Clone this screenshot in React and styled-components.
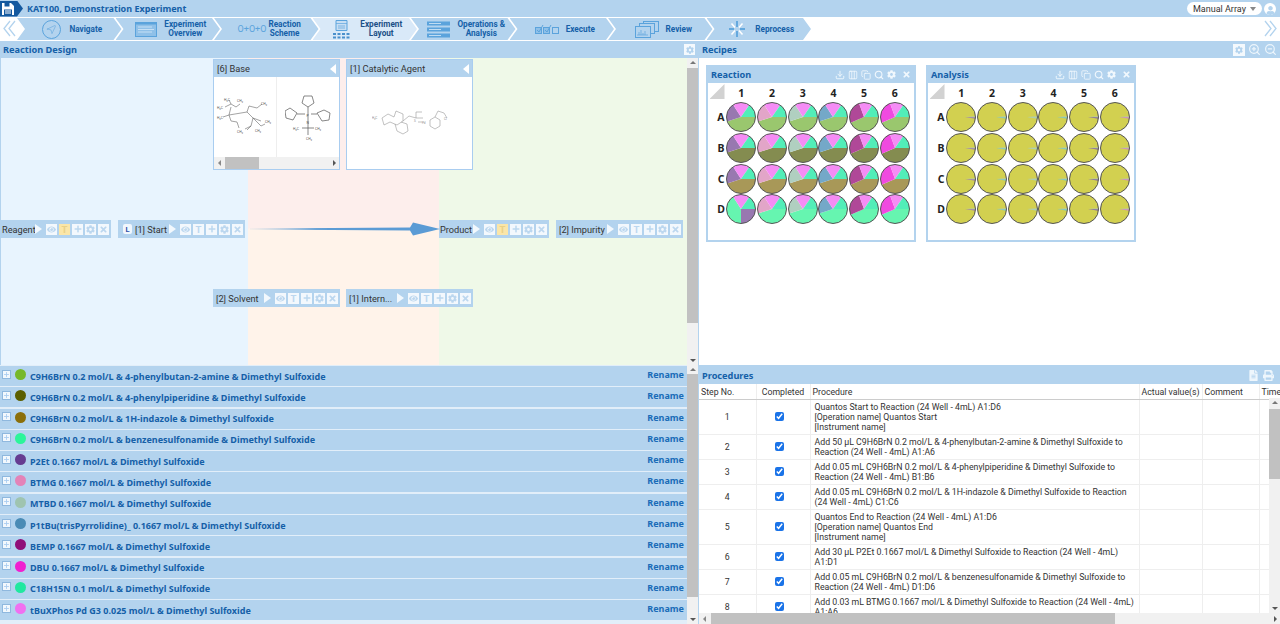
import React from "react";
import styled, { createGlobalStyle } from "styled-components";
import { FaEye, FaPlus, FaCog, FaTimes, FaUser, FaPrint, FaFileAlt } from "react-icons/fa";
import { Download, Columns3, Copy, Search, ZoomIn, ZoomOut, Navigation, Plus } from "lucide-react";

const BLUE = "#b3d3ee";
const INK = "#1560a8";
const BOLD_FONT = `"Noto Sans", "DejaVu Sans", sans-serif`;

const GlobalStyle = createGlobalStyle`
    html, body {
        margin: 0;
        padding: 0;
        background: #fff;
        font-family: Roboto, "Noto Sans", sans-serif;
        font-size: 9px;
        color: #333;
    }
`;

const Page = styled.div`
    width: 1280px;
    height: 624px;
    display: flex;
    flex-direction: column;
    overflow: hidden;
    background: #fff;
`;

/* top bar */
const TopBar = styled.div`
    height: 17px;
    background: ${BLUE};
    display: flex;
    align-items: center;
`;

const SaveBadge = styled.div`
    width: 23px;
    height: 16px;
    background: #14599f;
    clip-path: polygon(0 0, 17px 0, 100% 50%, 17px 100%, 0 100%);
    display: flex;
    align-items: center;
    padding-left: 2px;
    box-sizing: border-box;
`;

const ExperimentTitle = styled.div`
    margin-left: 4px;
    font-family: ${BOLD_FONT};
    font-weight: 700;
    font-size: 9px;
    color: ${INK};
    flex: 1;
`;

const ModeSelect = styled.div`
    width: 75px;
    height: 13px;
    background: #fff;
    border-radius: 7px;
    display: flex;
    align-items: center;
    justify-content: space-between;
    padding: 0 6px;
    box-sizing: border-box;
    font-size: 9px;
    color: #333;
    white-space: nowrap;

    &::after {
        content: "";
        border: 3.5px solid transparent;
        border-top: 4px solid #888;
        border-bottom: 0;
    }
`;

const UserBubble = styled.div`
    width: 12px;
    height: 12px;
    border-radius: 50%;
    background: #fff;
    margin: 0 4px 0 2px;
    color: ${BLUE};
    display: flex;
    align-items: flex-end;
    justify-content: center;
    overflow: hidden;
`;

/* wizard */
const Wizard = styled.div`
    height: 22px;
    padding: 1px 0 0 17px;
    display: flex;
    align-items: stretch;
    position: relative;
    background: #fff;
`;

const WizardArrow = styled.div`
    position: absolute;
    top: 0;
    ${(p) => (p.$right ? "right: 3px;" : "left: 3px;")}
    height: 100%;
    display: flex;
    align-items: center;
`;

const Step = styled.div`
    width: 104.5px;
    margin-right: -6px;
    flex: none;
    background: ${(p) => (p.$active ? "#d9e9f8" : BLUE)};
    clip-path: polygon(0 0, calc(100% - 8px) 0, 100% 50%, calc(100% - 8px) 100%, 0 100%, 8px 50%);
    display: flex;
    align-items: center;
    justify-content: center;
    gap: ${(p) => p.$gap ?? 7}px;
    padding-left: 6px;
    box-sizing: border-box;
`;

const StepLabel = styled.div`
    font-size: 8.2px;
    font-weight: 700;
    line-height: 9px;
    text-align: center;
    white-space: nowrap;
    color: ${(p) => (p.$active ? "#1b4f86" : INK)};
`;

const SchemeGlyph = styled.span`
    font-size: 9px;
    color: #5ba3dc;
    white-space: nowrap;
`;

/* panels */
const Workspace = styled.div`
    flex: 1;
    display: grid;
    grid-template-columns: 698px 582px;
    grid-template-rows: 324px 1fr;
    min-height: 0;
    background: ${BLUE};
    margin-top: 1px;
`;

const Panel = styled.section`
    display: flex;
    flex-direction: column;
    min-height: 0;
    min-width: 0;
    overflow: hidden;
    ${(p) => p.$right && `border-left: 1px solid ${BLUE};`}
`;

const PanelHeader = styled.header`
    height: 17px;
    flex: none;
    background: ${BLUE};
    display: flex;
    align-items: center;
    padding: 0 ${(p) => p.$end || 3}px 0 3px;
    gap: ${(p) => p.$gap || 3}px;
    ${(p) => p.$lower && "margin-top: 2px;"}
`;

const PanelTitle = styled.h2`
    margin: -1px 0 0;
    flex: 1;
    font-family: ${BOLD_FONT};
    font-size: 9.2px;
    font-weight: 700;
    color: ${INK};
`;

const HeaderTile = styled.span`
    width: ${(p) => p.$size || 11}px;
    height: ${(p) => p.$size || 11}px;
    background: #f4f9fd;
    color: ${BLUE};
    display: flex;
    align-items: center;
    justify-content: center;
`;

const HeaderIcon = styled.span`
    color: #eef6fc;
    display: flex;
`;

const Body = styled.div`
    flex: 1;
    min-height: 0;
    display: flex;
    background: #fff;
`;

/* scrollbars */
const VTrack = styled.div`
    width: 11px;
    flex: none;
    background: #f1f1f1;
    display: flex;
    flex-direction: column;
    align-items: stretch;
    position: relative;
`;

const Thumb = styled.div`
    background: #c1c1c1;
    margin-top: ${(p) => p.$top}px;
    height: ${(p) => p.$size}px;
`;

const ArrowMark = styled.span`
    position: absolute;
    left: 50%;
    margin-left: -3px;
    ${(p) => (p.$up ? "top: 3px;" : "bottom: 3px;")}
    border: 3px solid transparent;
    ${(p) => (p.$up ? "border-bottom: 3px solid #777; border-top: 0;" : "border-top: 3px solid #555; border-bottom: 0;")}
`;

const HTrack = styled.div`
    height: ${(p) => p.$h || 10}px;
    background: #f1f1f1;
    position: relative;
    flex: none;
`;

const HThumb = styled.div`
    background: #c1c1c1;
    height: 100%;
    margin-left: ${(p) => p.$left}px;
    width: ${(p) => p.$size}px;
`;

const SideArrow = styled.span`
    position: absolute;
    top: 50%;
    margin-top: -3px;
    ${(p) => (p.$end ? "right: 3px;" : "left: 4px;")}
    border: 3px solid transparent;
    ${(p) => (p.$end ? "border-left: 3px solid #555; border-right: 0;" : "border-right: 3px solid #888; border-left: 0;")}
`;

/* reaction canvas */
const Canvas = styled.div`
    flex: 1;
    position: relative;
    display: grid;
    grid-template-columns: 247px 191px 1fr;
    border-left: 1px solid ${BLUE};
    overflow: hidden;
`;

const BlueBand = styled.div`
    background: #e8f4fe;
`;

const MiddleBand = styled.div`
    background: linear-gradient(#fdeeec 0, #fdeeec 170px, #fff3ea 171px);
`;

const GreenBand = styled.div`
    background: #eff9e8;
`;

const Tray = styled.div`
    position: absolute;
    left: ${(p) => p.$x}px;
    top: 1px;
    width: 127px;
    height: 111px;
    border: 1px solid #a9cdf0;
    box-sizing: border-box;
    background: #fff;
    display: flex;
    flex-direction: column;
`;

const TrayHead = styled.div`
    height: 17px;
    flex: none;
    background: ${BLUE};
    display: flex;
    align-items: center;
    justify-content: space-between;
    padding: 0 3px;
    font-size: 9.3px;
    color: #333;

    &::after {
        content: "";
        border: 5px solid transparent;
        border-right: 6px solid #fff;
        border-left: 0;
    }
`;

const TrayBody = styled.div`
    flex: 1;
    display: flex;
    min-height: 0;
`;

const Molecule = styled.div`
    flex: 1;
    display: flex;
    align-items: center;
    justify-content: center;
    & + & {
        border-left: 1px solid #eee;
    }
`;

const Node = styled.div`
    position: absolute;
    left: ${(p) => p.$x}px;
    top: ${(p) => p.$y}px;
    width: ${(p) => p.$w}px;
    height: 18px;
    background: ${BLUE};
    display: flex;
    align-items: center;
    padding: 0 2px 0 ${(p) => p.$pad}px;
    box-sizing: border-box;
    font-size: 9.2px;
    color: #333;
    gap: 2px;
`;

const NodeName = styled.span`
    flex: 1;
    white-space: nowrap;
    min-width: 0;
`;

const LimitBadge = styled.span`
    width: 9px;
    height: 10px;
    flex: none;
    background: #f1f7fd;
    border-radius: 2px;
    color: #2c4fa8;
    font-size: 7.5px;
    font-weight: 700;
    display: flex;
    align-items: center;
    justify-content: center;
    margin: 0 1px 0 2px;
`;

const PlayMark = styled.span`
    border: 4px solid transparent;
    border-left: 7px solid #f2f8fd;
    border-right: 0;
    border-top-width: 5px;
    border-bottom-width: 5px;
    margin-right: 2px;
    flex: none;
`;

const Tool = styled.span`
    width: 11px;
    height: 11px;
    flex: none;
    background: ${(p) => (p.$on ? "#fbe6a8" : "#f3f8fd")};
    color: ${(p) => (p.$on ? "#e9d188" : "#bcd7ef")};
    font-size: 9.5px;
    font-weight: 700;
    display: flex;
    align-items: center;
    justify-content: center;
`;

const ArrowDrawing = styled.svg`
    position: absolute;
    left: 249px;
    top: 164px;
`;

/* reagents list */
const ReagentList = styled.div`
    flex: 1;
    min-width: 0;
    background: #e2eef9;
    display: flex;
    flex-direction: column;
    gap: 1.3px;
    padding-top: 1px;
`;

const Reagent = styled.div`
    height: 20px;
    flex: none;
    background: ${BLUE};
    display: flex;
    align-items: center;
    padding: 0 3px 0 2px;
    font-family: ${BOLD_FONT};
    font-size: 9px;
    font-weight: 700;
    color: ${INK};
`;

const Expander = styled.span`
    width: 9px;
    height: 9px;
    flex: none;
    background: #f2f8fd;
    border: 1px solid #8fb8de;
    box-sizing: border-box;
    margin: -4px 4px 0 0;
    color: #a9cdf0;
    display: flex;
    align-items: center;
    justify-content: center;
`;

const Dot = styled.span`
    width: 11px;
    height: 11px;
    flex: none;
    border-radius: 50%;
    background: ${(p) => p.$c};
    margin: -3px 4px 0 0;
`;

const ReagentName = styled.span`
    flex: 1;
    white-space: nowrap;
`;

const RenameLink = styled.span`
    color: #1a6cb8;
    margin-top: -3px;
`;

/* recipes */
const RecipeArea = styled.div`
    flex: 1;
    background: #fff;
    display: flex;
    align-items: flex-start;
    gap: 10px;
    padding: 7px;
`;

const RecipeCard = styled.div`
    width: 210px;
    height: 177px;
    box-sizing: border-box;
    border: 2px solid ${BLUE};
    border-top-width: 1px;
    display: flex;
    flex-direction: column;
`;

const CardHead = styled.div`
    height: 17px;
    flex: none;
    background: ${BLUE};
    display: flex;
    align-items: center;
    padding: 0 3px;
    gap: 3px;
    color: #f1f8fd;
`;

const CardTitle = styled.div`
    flex: 1;
    font-family: ${BOLD_FONT};
    font-size: 9.2px;
    font-weight: 700;
    color: ${INK};
`;

const CloseMark = styled.span`
    display: flex;
    margin-left: 3px;
`;

const Plate = styled.div`
    display: grid;
    grid-template-columns: 18px repeat(6, 30.7px);
    grid-template-rows: 19px repeat(4, 30.7px);
    font-family: ${BOLD_FONT};
    font-size: 10.5px;
    font-weight: 700;
    color: #222;
    justify-items: center;
    align-items: center;
`;

const PlateCorner = styled.div`
    width: 15px;
    height: 15px;
    background: #d2d2d2;
    clip-path: polygon(100% 0, 100% 100%, 0 100%);
    align-self: start;
    margin-top: 1px;
`;

const ColNumber = styled.span`
    margin-top: 1px;
`;

const RowLetter = styled.span`
    margin-left: 8px;
`;

/* procedures */
const TableWrap = styled.div`
    flex: 1;
    min-height: 0;
    display: flex;
    flex-direction: column;
    background: #fff;
`;

const TableViewport = styled.div`
    flex: 1;
    min-height: 0;
    position: relative;
    overflow: hidden;
`;

const ProcTable = styled.table`
    border-collapse: collapse;
    table-layout: fixed;
    width: 600px;
    font-size: 8.75px;
    color: #333;

    th {
        height: 15px;
        font-weight: 400;
        text-align: left;
        padding: 0 2px;
        white-space: nowrap;
        overflow: hidden;
        border-right: 1px solid #eee;
        border-bottom: 1px solid #ccc;
    }

    td {
        border-right: 1px solid #eee;
        border-bottom: 1px solid #eee;
        padding: 2px 4px;
        line-height: 10px;
        white-space: nowrap;
        vertical-align: middle;
    }
`;

const CenterTh = styled.th`
    && {
        text-align: center;
    }
`;

const CenterCell = styled.td`
    && {
        text-align: center;
    }
`;

const Check = styled.input`
    width: 9px;
    height: 9px;
    margin: 0 8px 0 0;
    accent-color: #1a73e8;
`;

const TableScroll = styled.div`
    position: absolute;
    right: 0;
    top: 14px;
    bottom: 0;
    display: flex;
`;

/* data */
const reagents = [
    ["C9H6BrN 0.2 mol/L & 4-phenylbutan-2-amine & Dimethyl Sulfoxide", "#76b82a"],
    ["C9H6BrN 0.2 mol/L & 4-phenylpiperidine & Dimethyl Sulfoxide", "#5b5f00"],
    ["C9H6BrN 0.2 mol/L & 1H-indazole & Dimethyl Sulfoxide", "#8b6f0a"],
    ["C9H6BrN 0.2 mol/L & benzenesulfonamide & Dimethyl Sulfoxide", "#2cf59a"],
    ["P2Et 0.1667 mol/L & Dimethyl Sulfoxide", "#663c91"],
    ["BTMG 0.1667 mol/L & Dimethyl Sulfoxide", "#e383b8"],
    ["MTBD 0.1667 mol/L & Dimethyl Sulfoxide", "#9fc4b0"],
    ["P1tBu(trisPyrrolidine)_ 0.1667 mol/L & Dimethyl Sulfoxide", "#4a8bb5"],
    ["BEMP 0.1667 mol/L & Dimethyl Sulfoxide", "#900f78"],
    ["DBU 0.1667 mol/L & Dimethyl Sulfoxide", "#f020d0"],
    ["C18H15N 0.1 mol/L & Dimethyl Sulfoxide", "#20e8a0"],
    ["tBuXPhos Pd G3 0.025 mol/L & Dimethyl Sulfoxide", "#f070f0"],
];

const procedures = [
    ["Quantos Start to Reaction (24 Well - 4mL) A1:D6", "[Operation name] Quantos Start", "[Instrument name]"],
    ["Add 50 µL C9H6BrN 0.2 mol/L & 4-phenylbutan-2-amine & Dimethyl Sulfoxide to", "Reaction (24 Well - 4mL) A1:A6"],
    ["Add 0.05 mL C9H6BrN 0.2 mol/L & 4-phenylpiperidine & Dimethyl Sulfoxide to", "Reaction (24 Well - 4mL) B1:B6"],
    ["Add 0.05 mL C9H6BrN 0.2 mol/L & 1H-indazole & Dimethyl Sulfoxide to Reaction", "(24 Well - 4mL) C1:C6"],
    ["Quantos End to Reaction (24 Well - 4mL) A1:D6", "[Operation name] Quantos End", "[Instrument name]"],
    ["Add 30 µL P2Et 0.1667 mol/L & Dimethyl Sulfoxide to Reaction (24 Well - 4mL)", "A1:D1"],
    ["Add 0.05 mL C9H6BrN 0.2 mol/L & benzenesulfonamide & Dimethyl Sulfoxide to", "Reaction (24 Well - 4mL) D1:D6"],
    ["Add 0.03 mL BTMG 0.1667 mol/L & Dimethyl Sulfoxide to Reaction (24 Well - 4mL)", "A1:A6"],
];

const colTints = ["#9878b0", "#e2a5c8", "#b0cfc0", "#74a8c8", "#b04898", "#f04ae0"];
const rowTints = ["#9ac76e", "#848c50", "#a89858", "#66f5b0"];
const analysisTints = ["#9878b0", "#7cc8c8", "#a8d0c0", "#74c8c8", "#8060a0", "#d080d0"];

/* pie helpers */
const RADIUS = 14.5;

const polar = (deg) => {
    const a = (deg * Math.PI) / 180;
    return [15 + RADIUS * Math.cos(a), 15 + RADIUS * Math.sin(a)];
};

const slice = (from, to, fill) => {
    const [x1, y1] = polar(from);
    const [x2, y2] = polar(to);
    const large = to - from > 180 ? 1 : 0;
    return <path key={from} d={`M15 15L${x1} ${y1}A${RADIUS} ${RADIUS} 0 ${large} 1 ${x2} ${y2}Z`} fill={fill} />;
};

function ReactionWell({ row, col }) {
    const first = row === 3 && col === 0;
    const bottom = rowTints[row];
    const left = colTints[col];
    const split = col > 3 ? 157 : 162;
    const top = col > 3 ? 250 : 237;
    return (
        <svg width="30" height="30" viewBox="0 0 30 30">
            {first ? (
                <>
                    {slice(0, 90, left)}
                    {slice(90, 237, bottom)}
                </>
            ) : (
                <>
                    {slice(0, split, bottom)}
                    {slice(split, top, left)}
                </>
            )}
            {slice(first ? 237 : top, 305, "#f58cf5")}
            {slice(305, 360, "#52eeb8")}
            <circle cx="15" cy="15" r={RADIUS} fill="none" stroke="#555" strokeWidth="1" />
        </svg>
    );
}

function AnalysisWell({ col }) {
    return (
        <svg width="30" height="30" viewBox="0 0 30 30">
            <circle cx="15" cy="15" r={RADIUS} fill="#d2d050" />
            <path d="M19 15L29.500 15.200 29.400 16.700Z" fill={analysisTints[col]} />
            <path d="M19 15L29.500 14.400 29.500 15.200Z" fill="#a8c8d8" />
            <circle cx="15" cy="15" r={RADIUS} fill="none" stroke="#555" strokeWidth="1" />
        </svg>
    );
}

function PlateGrid({ renderWell }) {
    return (
        <Plate>
            <PlateCorner />
            {[1, 2, 3, 4, 5, 6].map((n) => (
                <ColNumber key={n}>{n}</ColNumber>
            ))}
            {["A", "B", "C", "D"].map((letter, row) => (
                <React.Fragment key={letter}>
                    <RowLetter>{letter}</RowLetter>
                    {[0, 1, 2, 3, 4, 5].map((col) => (
                        <React.Fragment key={col}>{renderWell(row, col)}</React.Fragment>
                    ))}
                </React.Fragment>
            ))}
        </Plate>
    );
}

function Recipe({ title, renderWell }) {
    return (
        <RecipeCard>
            <CardHead>
                <CardTitle>{title}</CardTitle>
                <Download size={10} strokeWidth={2.2} />
                <Columns3 size={10} strokeWidth={2} />
                <Copy size={10} strokeWidth={2} />
                <Search size={10} strokeWidth={2.6} />
                <FaCog size={9} />
                <CloseMark>
                    <FaTimes size={9} />
                </CloseMark>
            </CardHead>
            <PlateGrid renderWell={renderWell} />
        </RecipeCard>
    );
}

/* node toolbar on the reaction canvas */
function ReactionNode({ x, y, w, label, limit, highlight, pad = 3 }) {
    return (
        <Node $x={x} $y={y} $w={w} $pad={pad}>
            {limit && <LimitBadge>L</LimitBadge>}
            <NodeName>{label}</NodeName>
            <PlayMark />
            <Tool>
                <FaEye size={9} />
            </Tool>
            <Tool $on={highlight}>T</Tool>
            <Tool>
                <FaPlus size={8} />
            </Tool>
            <Tool>
                <FaCog size={9} />
            </Tool>
            <Tool>
                <FaTimes size={9} />
            </Tool>
        </Node>
    );
}

/* hand drawn structures, thin grey lines with tiny atom labels */
function Phosphazene() {
    return (
        <svg width="60" height="44" viewBox="0 0 60 44" stroke="#666" strokeWidth="0.6" fill="none">
            <path d="M10 12l6-3 5 3 4-3M16 9l-2-4M16 12l-2 8-6 2M14 20l2 6 6 1 2 6M14 20l18-3 6 6 8 3M32 17l2-6 8 2 5-4M38 23l-2 8-6 3M38 23l8 8 4-2M36 31l-4 4" />
            <g fill="#555" stroke="none" fontSize="3.4" fontFamily="Roboto, sans-serif">
                <text x="9" y="6">H₃C</text>
                <text x="22" y="7">CH₃</text>
                <text x="2" y="14">H₃C</text>
                <text x="2" y="24">H₃C</text>
                <text x="46" y="10">CH₃</text>
                <text x="50" y="28">CH₃</text>
                <text x="22" y="38">CH₃</text>
                <text x="40" y="37">CH₃</text>
            </g>
        </svg>
    );
}

function Pyrrolidines() {
    return (
        <svg width="46" height="48" viewBox="0 0 46 48" stroke="#555" strokeWidth="0.7" fill="none">
            <path d="M23 13l-6-4 2-7h8l2 7zM12 19l-7-5-5 3 1 7 7 2zM32 19l7-3 6 3-1 7-7 1zM23 13v7M12 20h8M26 20h6M23 20v14M17 34h12M23 34v7" transform="translate(0 1)" />
            <g fill="#555" stroke="none" fontSize="3.4" fontFamily="Roboto, sans-serif">
                <text x="21.500" y="24">P</text>
                <text x="21.500" y="31">N</text>
                <text x="8" y="37">H₃C</text>
                <text x="30" y="37">CH₃</text>
                <text x="21" y="47">CH₃</text>
            </g>
        </svg>
    );
}

function Palladacycle() {
    return (
        <svg width="76" height="34" viewBox="0 0 76 34" stroke="#999" strokeWidth="0.6" fill="none">
            <path d="M10 12l6-4 6 3 2-6 7 3v7l-6 4-7-3-6 3-2-7M23 18l2 7 6 3 5-3-1-7-6-2M31 15l6-5 7 2M44 12v-6M44 12h7M44 6h6M46 16h4M58 20l5 3 5-3v-6l-5-3-5 3zM63 11l3-6 6 2 3 5" />
            <g fill="#888" stroke="none" fontSize="3" fontFamily="Roboto, sans-serif">
                <text x="0" y="13">H₃C</text>
                <text x="42" y="16">S</text>
                <text x="50" y="18">Pd</text>
                <text x="72" y="14">Cl</text>
            </g>
        </svg>
    );
}

function App() {
    const steps = [
        { label: "Navigate", gap: 8, icon: <Navigation size={16} color="#5ba3dc" strokeWidth={1.2} style={{ border: "1px solid #5ba3dc", borderRadius: "50%", padding: 3, boxSizing: "border-box", width: 19, height: 19 }} /> },
        {
            label: "Experiment\nOverview",
            icon: (
                <svg width="22" height="15" viewBox="0 0 22 15">
                    <rect x="0.500" y="0.500" width="21" height="14" fill="#8fc0e8" stroke="#5ba3dc" />
                    <rect x="0.500" y="0.500" width="21" height="2" fill="#5ba3dc" />
                    <path d="M3 5h14M3 7.500h16M3 10h14" stroke="#c6e0f5" />
                </svg>
            ),
        },
        { label: "Reaction\nScheme", gap: 2, icon: <SchemeGlyph>O+O+O</SchemeGlyph> },
        {
            label: "Experiment\nLayout",
            active: true,
            gap: 10,
            icon: (
                <svg width="17" height="19" viewBox="0 0 17 19">
                    <path d="M3 .5h11v10H3z" fill="#c7def3" stroke="#5ba3dc" />
                    <path d="M3 3.500h11M5 6h7M5 8h7" stroke="#5ba3dc" strokeWidth="0.7" />
                    <path d="M0 14h3M4.500 14h3M9 14h3M13.500 14h3M0 17.500h3M4.500 17.500h3M9 17.500h3M13.500 17.500h3" stroke="#4a90cc" strokeWidth="2" />
                </svg>
            ),
        },
        {
            label: "Operations &\nAnalysis",
            icon: (
                <svg width="23" height="17" viewBox="0 0 23 17">
                    <rect y="0.500" width="23" height="4" fill="#5ba3dc" />
                    <rect y="6.500" width="23" height="4" fill="#5ba3dc" />
                    <rect y="12.500" width="23" height="4" fill="#5ba3dc" />
                    <path d="M2 2.500h12M2 8.500h12M2 14.500h12" stroke="#bfdcf2" />
                </svg>
            ),
        },
        {
            label: "Execute",
            icon: (
                <svg width="24" height="11" viewBox="0 0 24 11" fill="none" stroke="#5ba3dc">
                    <rect x="0.500" y="3.500" width="6" height="6" fill="#8fc0e8" />
                    <rect x="8.500" y="3.500" width="6" height="6" fill="#8fc0e8" />
                    <rect x="17.500" y="3.500" width="6" height="6" />
                    <path d="M2 6l2 2 4-7M10 6l2 2 4-7" />
                </svg>
            ),
        },
        {
            label: "Review",
            icon: (
                <svg width="24" height="17" viewBox="0 0 24 17" fill="#b3d3ee" stroke="#5ba3dc">
                    <rect x="8.500" y="0.500" width="15" height="10" />
                    <rect x="4.500" y="2.500" width="15" height="10" />
                    <rect x="0.500" y="5.500" width="15" height="11" />
                    <path d="M2 14h11M4 14v-3M6 14v-5M8 14v-2M10 14v-4" strokeWidth="0.7" />
                </svg>
            ),
        },
        {
            label: "Reprocess",
            gap: 10,
            icon: (
                <svg width="16" height="16" viewBox="0 0 16 16" stroke="#4a9ad8" strokeWidth="1.500">
                    <path d="M8 0v6M8 10v6M0 8h5M11 8h5" />
                    <path d="M2.500 2.500l3.500 4M10 9.500l3.500 4M13.500 2.500l-3.500 4M6 9.500l-3.500 4" stroke="#fff" />
                </svg>
            ),
        },
    ];

    return (
        <Page>
            <GlobalStyle />
            <TopBar>
                <SaveBadge>
                    <svg width="12" height="12" viewBox="0 0 12 12">
                        <path d="M0 0h9l3 3v9H0z" fill="#fff" />
                        <path d="M2.500 0h5v3.500h-5zM2 6.500h8V12H2z" fill="#14599f" />
                        <path d="M3 8h6M3 10h6" stroke="#fff" />
                    </svg>
                </SaveBadge>
                <ExperimentTitle>KAT100, Demonstration Experiment</ExperimentTitle>
                <ModeSelect>Manual Array</ModeSelect>
                <UserBubble>
                    <FaUser size={9} />
                </UserBubble>
            </TopBar>

            <Wizard>
                <WizardArrow>
                    <svg width="13" height="17" viewBox="0 0 13 17" fill="none" stroke="#b3d3ee" strokeWidth="1.300">
                        <path d="M7 1L1 8.500 7 16M12 1L6 8.500 12 16" />
                    </svg>
                </WizardArrow>
                {steps.map((s) => (
                    <Step key={s.label} $active={s.active} $gap={s.gap}>
                        {s.icon}
                        <StepLabel $active={s.active}>
                            {s.label.split("\n").map((line) => (
                                <div key={line}>{line}</div>
                            ))}
                        </StepLabel>
                    </Step>
                ))}
                <WizardArrow $right>
                    <svg width="13" height="17" viewBox="0 0 13 17" fill="none" stroke="#b3d3ee" strokeWidth="1.300">
                        <path d="M1 1l6 7.500L1 16M6 1l6 7.500L6 16" />
                    </svg>
                </WizardArrow>
            </Wizard>

            <Workspace>
                <Panel>
                    <PanelHeader>
                        <PanelTitle>Reaction Design</PanelTitle>
                        <HeaderTile>
                            <FaCog size={8} />
                        </HeaderTile>
                    </PanelHeader>
                    <Body>
                        <Canvas>
                            <BlueBand />
                            <MiddleBand />
                            <GreenBand />
                            <Tray $x={212}>
                                <TrayHead>[6] Base</TrayHead>
                                <TrayBody>
                                    <Molecule>
                                        <Phosphazene />
                                    </Molecule>
                                    <Molecule>
                                        <Pyrrolidines />
                                    </Molecule>
                                </TrayBody>
                                <HTrack $h={12}>
                                    <SideArrow />
                                    <HThumb $left={11} $size={34} />
                                    <SideArrow $end />
                                </HTrack>
                            </Tray>
                            <Tray $x={345}>
                                <TrayHead>[1] Catalytic Agent</TrayHead>
                                <TrayBody>
                                    <Molecule>
                                        <Palladacycle />
                                    </Molecule>
                                </TrayBody>
                            </Tray>
                            <ReactionNode x={-1} y={162} w={111} label="Reagent" highlight pad={2} />
                            <ReactionNode x={117} y={162} w={127} label="[1] Start" limit />
                            <ReactionNode x={438} y={162} w={110} label="Product" highlight pad={1} />
                            <ReactionNode x={555} y={162} w={127} label="[2] Impurity" />
                            <ReactionNode x={212} y={231} w={127} label="[2] Solvent" />
                            <ReactionNode x={345} y={231} w={127} label="[1] Intern..." />
                            <ArrowDrawing width="190" height="14" viewBox="0 0 190 14">
                                <defs>
                                    <linearGradient id="flow" x1="0" x2="1">
                                        <stop offset="0" stopColor="#5b9bd5" stopOpacity="0.1" />
                                        <stop offset="0.35" stopColor="#5b9bd5" />
                                    </linearGradient>
                                </defs>
                                <path d="M0 6.500L160 5.500 163 0.500 190 7 163 13.500 160 8.500 0 7.500Z" fill="url(#flow)" />
                            </ArrowDrawing>
                        </Canvas>
                        <VTrack>
                            <ArrowMark $up />
                            <Thumb $top={10} $size={255} />
                            <ArrowMark />
                        </VTrack>
                    </Body>
                </Panel>

                <Panel $right>
                    <PanelHeader>
                        <PanelTitle>Recipes</PanelTitle>
                        <HeaderTile $size={12}>
                            <FaCog size={8} />
                        </HeaderTile>
                        <HeaderIcon>
                            <ZoomIn size={13} strokeWidth={2.2} />
                        </HeaderIcon>
                        <HeaderIcon>
                            <ZoomOut size={13} strokeWidth={2.2} />
                        </HeaderIcon>
                    </PanelHeader>
                    <RecipeArea>
                        <Recipe title="Reaction" renderWell={(row, col) => <ReactionWell row={row} col={col} />} />
                        <Recipe title="Analysis" renderWell={(row, col) => <AnalysisWell col={col} />} />
                    </RecipeArea>
                </Panel>

                <Panel>
                    <Body>
                        <ReagentList>
                            {reagents.map(([name, color]) => (
                                <Reagent key={name}>
                                    <Expander>
                                        <Plus size={7} strokeWidth={3} />
                                    </Expander>
                                    <Dot $c={color} />
                                    <ReagentName>{name}</ReagentName>
                                    <RenameLink>Rename</RenameLink>
                                </Reagent>
                            ))}
                        </ReagentList>
                        <VTrack>
                            <ArrowMark $up />
                            <Thumb $top={9} $size={223} />
                            <ArrowMark />
                        </VTrack>
                    </Body>
                </Panel>

                <Panel $right>
                    <PanelHeader $lower $gap={4} $end={6}>
                        <PanelTitle>Procedures</PanelTitle>
                        <HeaderIcon>
                            <FaFileAlt size={11} />
                        </HeaderIcon>
                        <HeaderIcon>
                            <FaPrint size={11} />
                        </HeaderIcon>
                    </PanelHeader>
                    <TableWrap>
                        <TableViewport>
                            <ProcTable>
                                <colgroup>
                                    <col style={{ width: 57 }} />
                                    <col style={{ width: 54 }} />
                                    <col style={{ width: 329 }} />
                                    <col style={{ width: 63 }} />
                                    <col style={{ width: 57 }} />
                                    <col style={{ width: 40 }} />
                                </colgroup>
                                <thead>
                                    <tr>
                                        <th>Step No.</th>
                                        <CenterTh>Completed</CenterTh>
                                        <th>Procedure</th>
                                        <th>Actual value(s)</th>
                                        <th>Comment</th>
                                        <th>Time</th>
                                    </tr>
                                </thead>
                                <tbody>
                                    {procedures.map((lines, i) => (
                                        <tr key={i}>
                                            <CenterCell>{i + 1}</CenterCell>
                                            <CenterCell>
                                                <Check type="checkbox" defaultChecked readOnly />
                                            </CenterCell>
                                            <td>
                                                {lines.map((line) => (
                                                    <div key={line}>{line}</div>
                                                ))}
                                            </td>
                                            <td />
                                            <td />
                                            <td />
                                        </tr>
                                    ))}
                                </tbody>
                            </ProcTable>
                            <TableScroll>
                                <VTrack>
                                    <ArrowMark $up />
                                    <Thumb $top={11} $size={70} />
                                    <ArrowMark />
                                </VTrack>
                            </TableScroll>
                        </TableViewport>
                        <HTrack $h={11}>
                            <SideArrow />
                            <HThumb $left={12} $size={404} />
                            <SideArrow $end />
                        </HTrack>
                    </TableWrap>
                </Panel>
            </Workspace>
        </Page>
    );
}

export default App;
